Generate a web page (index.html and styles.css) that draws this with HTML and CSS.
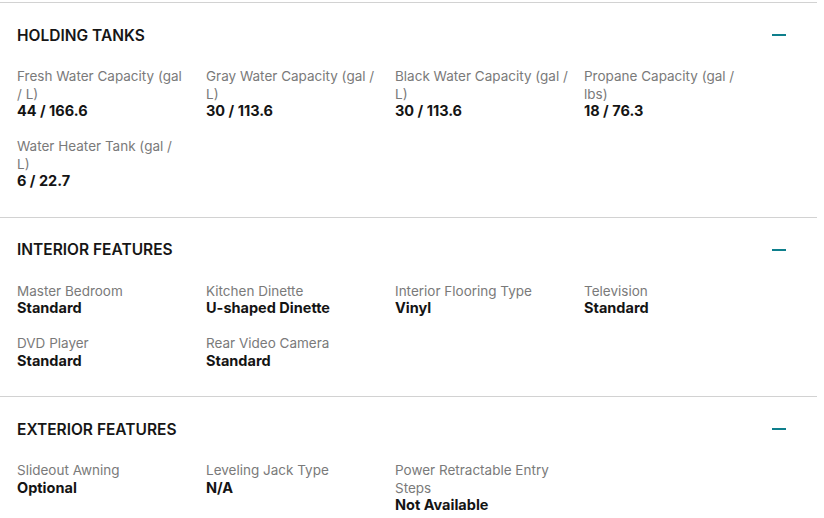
FILE: index.html
```html
<!DOCTYPE html>
<html>
<head>
<meta charset="utf-8">
<link rel="stylesheet" href="styles.css">
</head>
<body>
<div class="specs">
  <section class="group">
    <div class="group-head">
      <h2>HOLDING TANKS</h2>
      <span class="minus"></span>
    </div>
    <div class="grid">
      <div class="item"><div class="label">Fresh Water Capacity (gal / L)</div><div class="value">44 / 166.6</div></div>
      <div class="item"><div class="label">Gray Water Capacity (gal / L)</div><div class="value">30 / 113.6</div></div>
      <div class="item"><div class="label">Black Water Capacity (gal / L)</div><div class="value">30 / 113.6</div></div>
      <div class="item"><div class="label">Propane Capacity (gal / lbs)</div><div class="value">18 / 76.3</div></div>
      <div class="item"><div class="label">Water Heater Tank (gal / L)</div><div class="value">6 / 22.7</div></div>
    </div>
  </section>
  <section class="group">
    <div class="group-head">
      <h2>INTERIOR FEATURES</h2>
      <span class="minus"></span>
    </div>
    <div class="grid">
      <div class="item"><div class="label">Master Bedroom</div><div class="value">Standard</div></div>
      <div class="item"><div class="label">Kitchen Dinette</div><div class="value">U-shaped Dinette</div></div>
      <div class="item"><div class="label">Interior Flooring Type</div><div class="value">Vinyl</div></div>
      <div class="item"><div class="label">Television</div><div class="value">Standard</div></div>
      <div class="item"><div class="label">DVD Player</div><div class="value">Standard</div></div>
      <div class="item"><div class="label">Rear Video Camera</div><div class="value">Standard</div></div>
    </div>
  </section>
  <section class="group">
    <div class="group-head">
      <h2>EXTERIOR FEATURES</h2>
      <span class="minus"></span>
    </div>
    <div class="grid">
      <div class="item"><div class="label">Slideout Awning</div><div class="value">Optional</div></div>
      <div class="item"><div class="label">Leveling Jack Type</div><div class="value">N/A</div></div>
      <div class="item"><div class="label">Power Retractable Entry Steps</div><div class="value">Not Available</div></div>
    </div>
  </section>
</div>
</body>
</html>
```
FILE: styles.css
```css
html, body {
  margin: 0;
  padding: 0;
  background: #fff;
}
body {
  font-family: Inter, "Noto Sans", sans-serif;
  color: #1a1a1a;
}
.specs {
  width: 817px;
  padding-top: 2px;
}
.group {
  border-top: 1px solid #d2d2d2;
  padding: 20px 0 28.5px 17px;
}
.group-head {
  display: flex;
  align-items: center;
  justify-content: space-between;
  padding-right: 31px;
  height: 24px;
}
.group-head h2 {
  margin: 0;
  font-size: 15.5px;
  font-weight: 600;
  letter-spacing: 0;
  color: #161616;
}
.minus {
  width: 14px;
  height: 2px;
  background: #0e7f8c;
}
.grid {
  display: grid;
  grid-template-columns: repeat(4, 189px);
  row-gap: 20px;
  margin-top: 21px;
}
.item {
  padding-right: 16px;
}
.item:nth-child(4n+1) {
  padding-right: 21px;
}
.label {
  font-size: 13.5px;
  line-height: 17.5px;
  color: #7a7a7a;
}
.value {
  font-size: 14.5px;
  line-height: 15px;
  font-weight: 700;
  color: #141414;
}
```
